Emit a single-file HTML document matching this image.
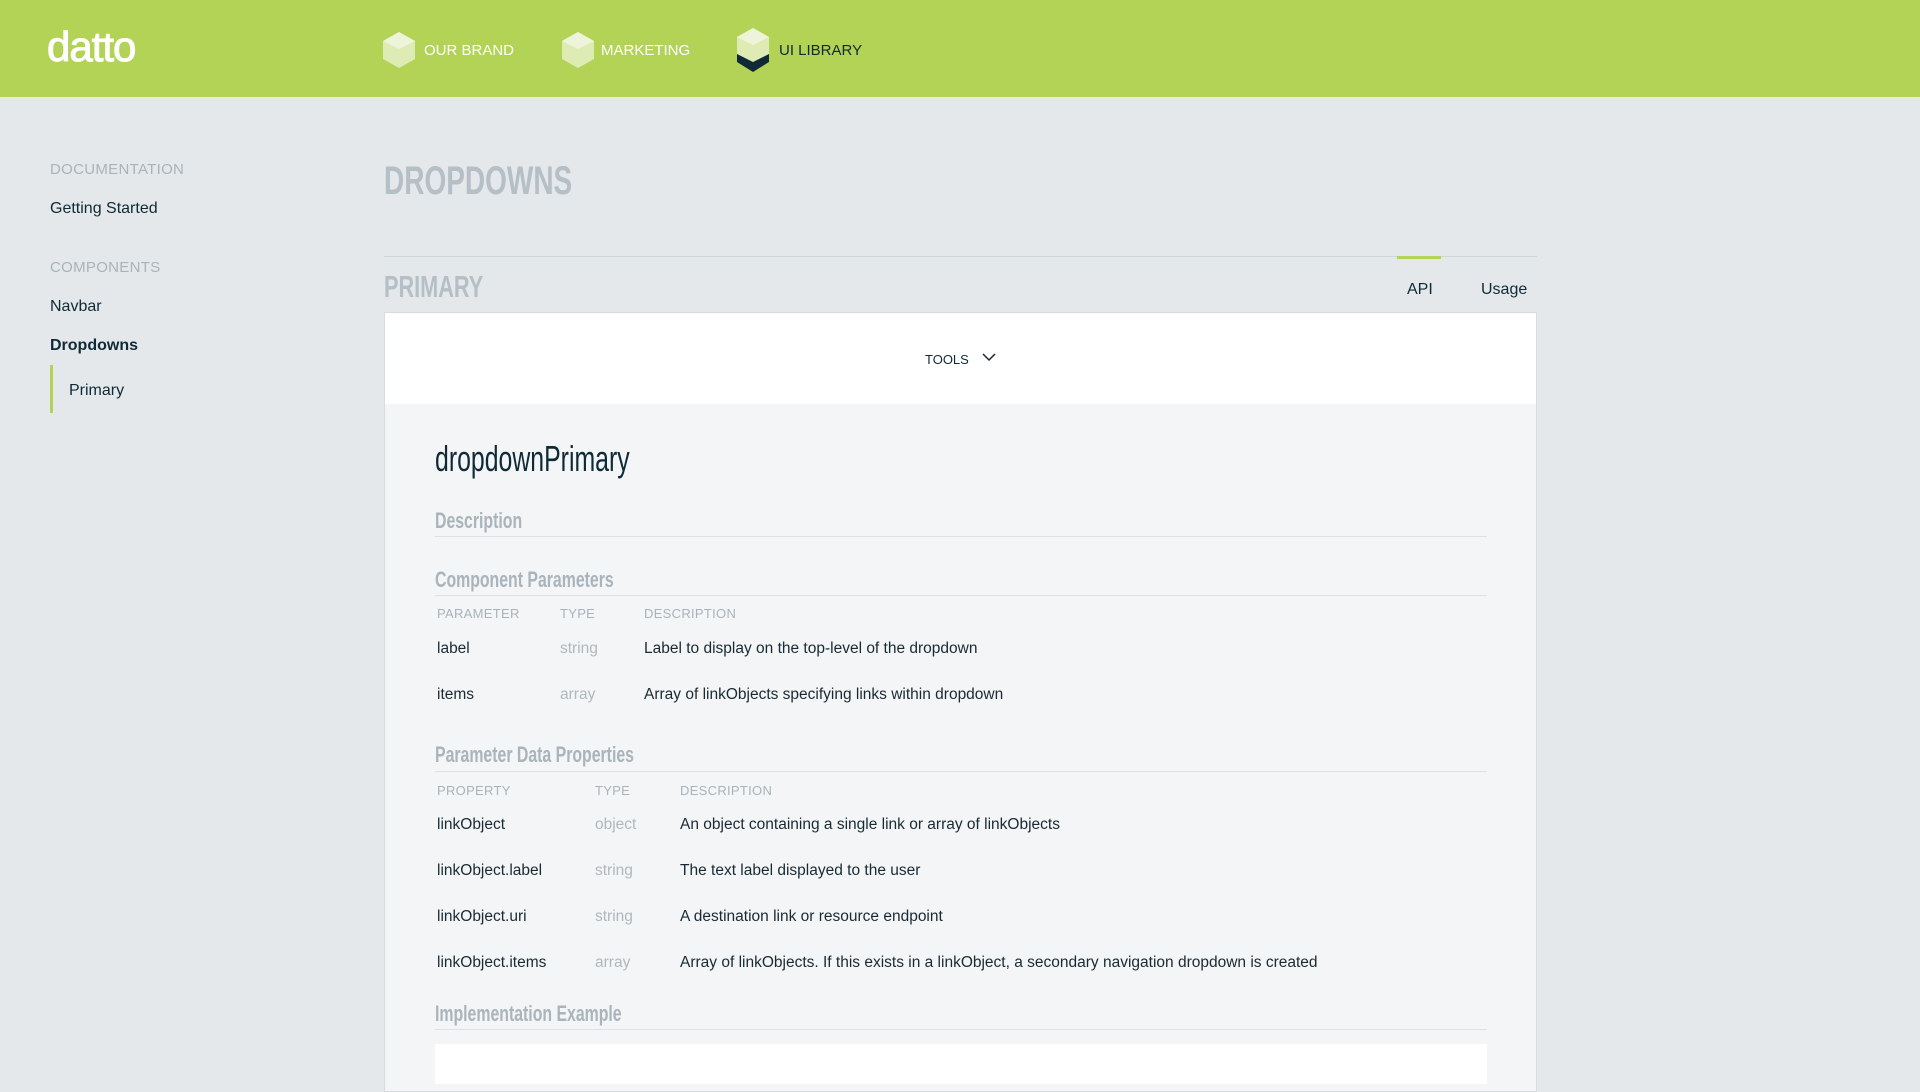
<!DOCTYPE html>
<html><head><meta charset="utf-8"><style>
*{margin:0;padding:0;box-sizing:border-box}
body{width:1920px;height:1080px;overflow:hidden;background:#e4e8eb;font-family:"Liberation Sans",sans-serif;position:relative;color:#0f2a36}
.a{position:absolute;white-space:nowrap;line-height:20px}
.hdr{position:absolute;left:0;top:0;width:1920px;height:97px;background:#b3d357}
.cond{display:inline-block;transform:scaleX(.72);transform-origin:left center;font-weight:bold}
.sh{color:#aab4bb;font-size:22px}
.th{font-size:13px;color:#a9b3ba;letter-spacing:.3px}
.td{font-size:15.5px;color:#1a2a33}
.ty{font-size:15.5px;color:#b0b8be}
.ln{position:absolute;height:1px;background:#dde2e5;left:435px;width:1052px}
</style></head><body>
<div class="hdr"></div>
<div class="a" style="left:47px;top:25px;font-size:42px;line-height:44px;color:#fff;letter-spacing:-1px;-webkit-text-stroke:1px #fff">datto</div>
<svg class="a" style="left:383px;top:32px" width="32" height="36" viewBox="0 0 32 36"><polygon points="16,0 32,9 32,27 16,36 0,27 0,9" fill="#dfebb5"/><polygon points="16,0 32,9 16,17 0,9" fill="#eef4d9"/></svg>
<div class="a" style="left:424px;top:41px;font-size:15px;color:#fff">OUR BRAND</div>
<svg class="a" style="left:562px;top:32px" width="32" height="36" viewBox="0 0 32 36"><polygon points="16,0 32,9 32,27 16,36 0,27 0,9" fill="#dfebb5"/><polygon points="16,0 32,9 16,17 0,9" fill="#eef4d9"/></svg>
<div class="a" style="left:601px;top:41px;font-size:15px;color:#fff">MARKETING</div>
<svg class="a" style="left:737px;top:28px" width="32" height="44" viewBox="0 0 32 44"><polygon points="16,26 32,18 32,34 16,44 0,34 0,18" fill="#0f2a36"/><polygon points="16,0 32,9 32,26 16,34 0,26 0,9" fill="#dfebb5"/><polygon points="16,0 32,9 16,17 0,9" fill="#eef4d9"/></svg>
<div class="a" style="left:779px;top:41px;font-size:15px;color:#0f2a36">UI LIBRARY</div>

<div class="a" style="left:50px;top:160px;font-size:15px;color:#a9b3ba;letter-spacing:.3px">DOCUMENTATION</div>
<div class="a" style="left:50px;top:199px;font-size:16px">Getting Started</div>
<div class="a" style="left:50px;top:258px;font-size:15px;color:#a9b3ba;letter-spacing:.3px">COMPONENTS</div>
<div class="a" style="left:50px;top:297px;font-size:16px">Navbar</div>
<div class="a" style="left:50px;top:336px;font-size:16px;font-weight:bold">Dropdowns</div>
<div style="position:absolute;left:50px;top:365px;width:3px;height:48px;background:#b3d357"></div>
<div class="a" style="left:69px;top:381px;font-size:16px">Primary</div>

<div class="a" style="left:384px;top:159px;font-size:40px;line-height:44px;color:#b5bfc6"><span class="cond" style="transform:scaleX(.7)">DROPDOWNS</span></div>
<div style="position:absolute;left:384px;top:256px;width:1153px;height:1px;background:#d0d7db"></div>
<div style="position:absolute;left:1397px;top:256px;width:44px;height:3px;background:#b3d357"></div>
<div class="a" style="left:384px;top:270px;font-size:31px;line-height:34px;color:#b5bfc6"><span class="cond" style="transform:scaleX(.7)">PRIMARY</span></div>
<div class="a" style="left:1407px;top:280px;font-size:16px">API</div>
<div class="a" style="left:1481px;top:280px;font-size:16px">Usage</div>

<div style="position:absolute;left:384px;top:312px;width:1153px;height:780px;background:#f3f5f7;border:1px solid #d6dde1"></div>
<div style="position:absolute;left:385px;top:313px;width:1151px;height:91px;background:#fff"></div>
<div class="a" style="left:925px;top:350px;font-size:13px">TOOLS</div>
<svg class="a" style="left:982px;top:352px" width="14" height="10" viewBox="0 0 14 10"><path d="M1 2l6 6 6-6" fill="none" stroke="#0f2a36" stroke-width="1.5"/></svg>

<div class="a" style="left:435px;top:439px;font-size:36px;line-height:40px;color:#0f2a36"><span class="cond" style="font-weight:normal;transform:scaleX(.69)">dropdownPrimary</span></div>

<div class="a sh" style="left:435px;top:509px;line-height:24px"><span class="cond">Description</span></div>
<div class="ln" style="top:536px"></div>
<div class="a sh" style="left:435px;top:568px;line-height:24px"><span class="cond">Component Parameters</span></div>
<div class="ln" style="top:595px"></div>
<div class="a th" style="left:437px;top:604px">PARAMETER</div>
<div class="a th" style="left:560px;top:604px">TYPE</div>
<div class="a th" style="left:644px;top:604px">DESCRIPTION</div>
<div class="a td" style="left:437px;top:639px">label</div>
<div class="a ty" style="left:560px;top:639px">string</div>
<div class="a td" style="left:644px;top:639px">Label to display on the top-level of the dropdown</div>
<div class="a td" style="left:437px;top:685px">items</div>
<div class="a ty" style="left:560px;top:685px">array</div>
<div class="a td" style="left:644px;top:685px">Array of linkObjects specifying links within dropdown</div>

<div class="a sh" style="left:435px;top:743px;line-height:24px"><span class="cond">Parameter Data Properties</span></div>
<div class="ln" style="top:771px"></div>
<div class="a th" style="left:437px;top:781px">PROPERTY</div>
<div class="a th" style="left:595px;top:781px">TYPE</div>
<div class="a th" style="left:680px;top:781px">DESCRIPTION</div>
<div class="a td" style="left:437px;top:815px">linkObject</div>
<div class="a ty" style="left:595px;top:815px">object</div>
<div class="a td" style="left:680px;top:815px">An object containing a single link or array of linkObjects</div>
<div class="a td" style="left:437px;top:861px">linkObject.label</div>
<div class="a ty" style="left:595px;top:861px">string</div>
<div class="a td" style="left:680px;top:861px">The text label displayed to the user</div>
<div class="a td" style="left:437px;top:907px">linkObject.uri</div>
<div class="a ty" style="left:595px;top:907px">string</div>
<div class="a td" style="left:680px;top:907px">A destination link or resource endpoint</div>
<div class="a td" style="left:437px;top:953px">linkObject.items</div>
<div class="a ty" style="left:595px;top:953px">array</div>
<div class="a td" style="left:680px;top:953px">Array of linkObjects. If this exists in a linkObject, a secondary navigation dropdown is created</div>

<div class="a sh" style="left:435px;top:1002px;line-height:24px"><span class="cond">Implementation Example</span></div>
<div class="ln" style="top:1029px"></div>
<div style="position:absolute;left:435px;top:1044px;width:1052px;height:40px;background:#fff"></div>
</body></html>
